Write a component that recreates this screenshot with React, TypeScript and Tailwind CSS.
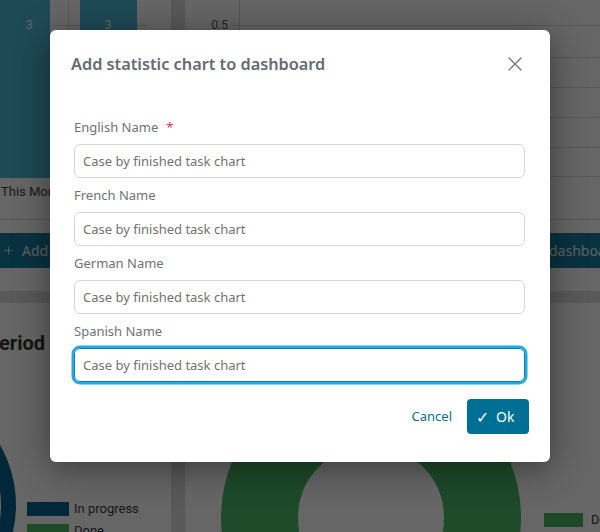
import { Plus, X } from "lucide-react";

const fields = [
  { label: "English Name", required: true },
  { label: "French Name" },
  { label: "German Name" },
  { label: "Spanish Name", focused: true },
];

function TopLeftCard() {
  return (
    <div className="flex w-[171px] shrink-0 flex-col bg-white">
      <div className="h-[220px] border-b border-[#d6d6d6]">
        <svg width="171" height="219" className="block font-['Roboto',sans-serif]">
          <line x1="68.5" y1="0" x2="68.5" y2="178" stroke="#e4e4e4" />
          <line x1="0" y1="25.5" x2="147" y2="25.5" stroke="#d9d9d9" />
          <rect x="0" y="0" width="50" height="178" fill="#4bbad6" />
          <rect x="80" y="0" width="57" height="178" fill="#4bbad6" />
          <text x="29" y="29" fontSize="12" fill="#ffffff" textAnchor="middle">3</text>
          <text x="108" y="29" fontSize="12" fill="#ffffff" textAnchor="middle">3</text>
          <text x="1" y="196" fontSize="13" fill="#444444">This Month</text>
        </svg>
      </div>
      <div className="mt-[13px] flex h-[35px] items-center gap-[7px] bg-[#187ea4] pl-[2px] text-[14px] whitespace-nowrap text-white/90">
        <Plus size={13} strokeWidth={1.5} />
        <span>Add to dashboard</span>
      </div>
    </div>
  );
}

function TopRightCard() {
  const grid = [25.5, 57.5, 87.5, 117.5, 147.5, 176.5];
  return (
    <div className="flex min-w-0 flex-1 flex-col bg-white">
      <div className="h-[220px] border-b border-[#d6d6d6]">
        <svg width="415" height="219" className="block font-['Roboto',sans-serif]">
          <line x1="54.5" y1="0" x2="54.5" y2="177" stroke="#d4d4d4" />
          {grid.map((y) => (
            <line key={y} x1="47" y1={y} x2="415" y2={y} stroke="#d9d9d9" />
          ))}
          <text x="43" y="29" fontSize="12" fill="#555555" textAnchor="end">0.5</text>
        </svg>
      </div>
      <div className="mt-[13px] flex h-[35px] items-center gap-[7px] bg-[#187ea4] pl-[310px] text-[14px] whitespace-nowrap text-white/90">
        <Plus size={13} strokeWidth={1.5} />
        <span>Add to dashboard</span>
      </div>
    </div>
  );
}

function BottomLeftCard() {
  return (
    <div className="flex w-[171px] shrink-0 flex-col bg-white">
      <div className="mt-[26px] flex w-[45px] justify-end font-['Roboto',sans-serif] text-[20px] leading-[28px] font-bold whitespace-nowrap text-[#333]">
        Tasks by Period
      </div>
      <div className="flex h-[175px]">
        <svg width="27" height="175" className="block shrink-0">
          <circle cx="-104" cy="148" r="112.5" fill="none" stroke="#006592" strokeWidth="15" />
        </svg>
        <div className="flex flex-col gap-[8px] pt-[145px] font-['Roboto',sans-serif] text-[13px] text-[#3c3c3c]">
          <div className="flex items-center gap-[5px]">
            <span className="h-[14px] w-[42px] bg-[#006592]" />
            <span className="leading-[14px]">In progress</span>
          </div>
          <div className="flex items-center gap-[5px]">
            <span className="h-[14px] w-[42px] bg-[#4bb96a]" />
            <span className="leading-[14px]">Done</span>
          </div>
        </div>
      </div>
    </div>
  );
}

function BottomRightCard() {
  return (
    <div className="flex min-w-0 flex-1 bg-white">
      <svg width="359" height="229" className="block shrink-0">
        <circle cx="186" cy="215" r="111.5" fill="none" stroke="#4bb96a" strokeWidth="77" />
      </svg>
      <div className="flex items-start gap-[8px] pt-[210px] font-['Roboto',sans-serif] text-[13px] text-[#3c3c3c]">
        <span className="h-[14px] w-[39px] shrink-0 bg-[#4bb96a]" />
        <span className="leading-[14px]">Done</span>
      </div>
    </div>
  );
}

function Field({ label, required, focused }: { label: string; required?: boolean; focused?: boolean }) {
  return (
    <label className="flex flex-col gap-[7px]">
      <span className="h-[20px] text-[13px] leading-[20px] text-[#6d7279]">
        {label}
        {required && <span className="ml-[8px] text-[#e5245f]">*</span>}
      </span>
      <input
        readOnly
        defaultValue="Case by finished task chart"
        className={
          focused
            ? "h-[34px] rounded-[6px] border border-[#137fa6] px-[8px] text-[13px] text-[#727272] outline-none ring-[2.5px] ring-[#1faae2]"
            : "h-[34px] rounded-[6px] border border-[#d6d6d6] px-[8px] text-[13px] text-[#727272] outline-none"
        }
      />
    </label>
  );
}

function Modal() {
  return (
    <div className="absolute inset-0 bg-black/60 pt-[30px]">
      <div className="mx-auto w-[500px] rounded-[6px] bg-white font-['Noto_Sans',sans-serif] shadow-[0_6px_36px_rgba(0,0,0,0.45)]">
        <div className="flex h-[68px] items-center justify-between pr-[23px] pl-[21px]">
          <h2 className="text-[16.3px] font-semibold text-[#656b73]">Add statistic chart to dashboard</h2>
          <X size={24} strokeWidth={1.4} className="text-[#777]" />
        </div>
        <div className="flex flex-col gap-[7px] pt-[19px] pr-[25px] pl-[24px]">
          {fields.map((f) => (
            <Field key={f.label} {...f} />
          ))}
        </div>
        <div className="flex items-center justify-end gap-[15px] pt-[17px] pr-[21px] pb-[28px]">
          <button className="text-[13px] text-[#0b6e90]">Cancel</button>
          <button className="flex h-[35px] w-[62px] items-center gap-[7px] rounded-[4px] bg-[#006f95] pl-[9px] text-[14px] text-white">
            <span className="text-[16px] leading-none font-light">✓</span>
            <span>Ok</span>
          </button>
        </div>
      </div>
    </div>
  );
}

export default function App() {
  return (
    <div className="relative h-[532px] w-[600px] overflow-hidden bg-[#dfdfdf] font-['Noto_Sans',sans-serif]">
      <div className="flex h-[291px] gap-[14px]">
        <TopLeftCard />
        <TopRightCard />
      </div>
      <div className="mt-[12px] flex h-[229px] gap-[14px]">
        <BottomLeftCard />
        <BottomRightCard />
      </div>
      <Modal />
    </div>
  );
}
